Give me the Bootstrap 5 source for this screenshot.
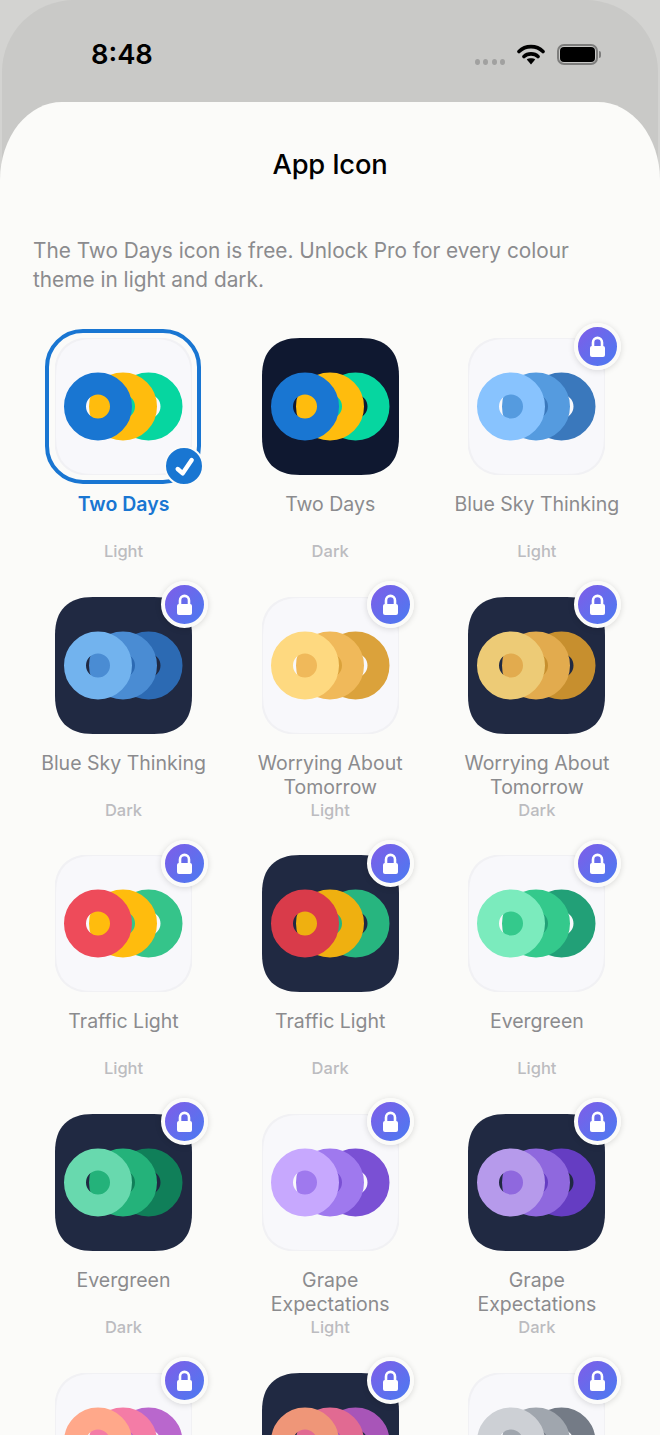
<!DOCTYPE html>
<html lang="en">
<head>
  <meta charset="UTF-8">
  <title>App Icon</title>
  <link href="https://cdn.jsdelivr.net/npm/bootstrap@5.3.0/dist/css/bootstrap.min.css" rel="stylesheet" />
  <style>
    html, body { height: 1435px; overflow: hidden; }
    body { background: #d3d3d1; font-family: Inter, "Liberation Sans", sans-serif; }
    .phone-back { height: 1435px; margin: 0 2px; background: #c9c9c7; border-radius: 72px 72px 0 0; }
    .status-row { height: 102px; padding: 6px 57px 0 89px; }
    .status-time { font-size: 27.3px; font-weight: 600; color: #000; width: 66px; padding-top: 3px; }
    .signal-dot { width: 5px; height: 6px; border-radius: 50%; background: #a1a1a0; }
    .signal-dots { gap: 3.5px; margin: 16px 12px 0 0; }
    .battery-shell { width: 41px; height: 21px; border: 2px solid #7d7d7c; border-radius: 7px; padding: 1px; }
    .battery-fill { background: #000; border-radius: 4px; }
    .battery-cap { width: 2px; height: 7px; background: #7d7d7c; border-radius: 0 2px 2px 0; margin-left: 1px; }
    .sheet { margin: 0 -2px; height: 1333px; background: #fbfbf9; border-radius: 62px 62px 0 0 / 78px 78px 0 0; }
    .sheet-title { font-size: 27.3px; font-weight: 500; line-height: 32px; color: #000; padding-top: 47px; margin: 0; letter-spacing: -0.2px; }
    .sheet-intro { font-size: 20.8px; line-height: 29px; color: #8b8b8e; margin: 0; padding: 55px 33px 0; }
    .icon-grid { padding: 44px 19.8px 0 20.2px; }
    .tile { height: 258.67px; }
    .icon-wrap { width: 137px; height: 137px; }
    .app-icon { width: 137px; height: 137px; display: block; }
    .picked-frame { position: absolute; inset: -9px -9px -9px -10px; border: 4.5px solid #1976d2; border-radius: 38px; }
    .picked-badge { position: absolute; right: -12px; bottom: -11px; width: 40px; height: 40px; border-radius: 50%; background: #1976d2; border: 2px solid #fbfbf9; }
    .lock-badge { position: absolute; right: -15.5px; top: -15.5px; width: 47px; height: 47px; border-radius: 50%; border: 4px solid #fbfbf9; background: linear-gradient(135deg, #7f5de8, #4a7bf1); box-shadow: 0 1px 6px rgba(0,0,0,.14); }
    .tile-name { font-size: 19.5px; line-height: 24px; height: 48px; color: #8b8b8e; margin-top: 17px; padding: 0 16px; }
    .tile-name.is-picked { color: #1976d2; font-weight: 600; }
    .tile-kind { font-size: 16.5px; line-height: 22px; color: #bcbcc0; font-weight: 500; }
  </style>
</head>
<body>

  <div class="phone-back">
    <!-- Status bar -->
    <div class="status-row d-flex align-items-center">
      <div class="status-time">8:48</div>
      <div class="signal-dots d-flex ms-auto">
        <span class="signal-dot"></span><span class="signal-dot"></span><span class="signal-dot"></span><span class="signal-dot"></span>
      </div>
      <svg width="28" height="22" viewBox="0 0 28 22" class="me-2">
        <path d="M2 8.5C8.5 2 19.5 2 26 8.5M7 13.5C10.5 10 17.5 10 21 13.5" fill="none" stroke="#000" stroke-width="3.6" stroke-linecap="round"/>
        <path d="M9.8 16.4C12 15 16 15 18.2 16.4L14 21.5Z" fill="#000"/>
      </svg>
      <div class="d-flex align-items-center ms-1">
        <div class="battery-shell d-flex"><div class="battery-fill flex-grow-1"></div></div>
        <div class="battery-cap"></div>
      </div>
    </div>

    <!-- Sheet -->
    <div class="sheet">
      <h1 class="sheet-title text-center">App Icon</h1>
      <p class="sheet-intro">The Two Days icon is free. Unlock Pro for every colour theme in light and dark.</p>
      <div class="icon-grid row g-0" id="iconGrid">
        <!-- Filled by JS -->
      </div>
    </div>
  </div>

  <script>
    const themes = [
      ['Two Days', 'Light', ['#1976d2', '#ffbc0d', '#06d6a0']],
      ['Two Days', 'Dark', ['#1976d2', '#ffbc0d', '#06d6a0']],
      ['Blue Sky Thinking', 'Light', ['#88c3fe', '#559bdf', '#3a78bc']],
      ['Blue Sky Thinking', 'Dark', ['#72b3ee', '#4a8cd3', '#2c6ab3']],
      ['Worrying About Tomorrow', 'Light', ['#fed980', '#f0b95a', '#dba23b']],
      ['Worrying About Tomorrow', 'Dark', ['#edcb76', '#e2ab4e', '#c78f2e']],
      ['Traffic Light', 'Light', ['#ee4b5a', '#ffbc0d', '#35c48a']],
      ['Traffic Light', 'Dark', ['#d93b4a', '#efb010', '#27b57f']],
      ['Evergreen', 'Light', ['#7bebbd', '#34c98c', '#22a077']],
      ['Evergreen', 'Dark', ['#68d9ae', '#24b27a', '#107f59']],
      ['Grape Expectations', 'Light', ['#c7a8fe', '#9f79ee', '#7a50d4']],
      ['Grape Expectations', 'Dark', ['#b69aeb', '#8f68de', '#653dc2']],
      ['', '', ['#ffa88a', '#f47ca6', '#b967cd']],
      ['', '', ['#ef9678', '#e16a92', '#a855b8']],
      ['', '', ['#cdd0d5', '#a0a6ae', '#747b86']]
    ];
    // last row is cut off by the screen, its labels never show
    const lastRowFills = ['#f8f8fb', '#202942', '#f8f8fb'];

    const squircle = 'M38 0H99C124 0 137 13 137 38V99C137 124 124 137 99 137H38C13 137 0 124 0 99V38C0 13 13 0 38 0Z';
    const lock = `<svg width="39" height="39" viewBox="0 0 39 39">
      <path d="M15 20v-4.6a4.5 4.5 0 0 1 9 0V20" fill="none" stroke="#fff" stroke-width="2.6"/>
      <rect x="12" y="19" width="15" height="11" rx="2" fill="#fff"/></svg>`;
    const check = `<svg width="36" height="36" viewBox="0 0 36 36">
      <path d="M11.7 21l5 4.3L25.7 12" fill="none" stroke="#fff" stroke-width="4.4" stroke-linecap="round" stroke-linejoin="round"/></svg>`;

    function ring(cx, color) {
      return `<circle cx="${cx}" cy="68.5" r="23" fill="none" stroke="${color}" stroke-width="22"/>`;
    }

    const grid = document.getElementById('iconGrid');
    themes.forEach((t, i) => {
      const picked = i === 0;
      let fill = t[1] === 'Dark' ? '#202942' : '#f8f8fb';
      if (i === 1) fill = '#0f1830';
      if (i >= 12) fill = lastRowFills[i - 12];
      const edge = fill === '#f8f8fb' ? 'stroke="#f1f1f4" stroke-width="2"' : '';
      const c = t[2];
      grid.innerHTML += `
        <div class="tile col-4 d-flex flex-column align-items-center text-center">
          <div class="icon-wrap position-relative">
            <svg class="app-icon" viewBox="0 0 137 137">
              <path d="${squircle}" fill="${fill}" ${edge}/>
              ${ring(93.5, c[2])}${ring(68, c[1])}${ring(43, c[0])}
            </svg>
            ${picked ? `<div class="picked-frame"></div><div class="picked-badge">${check}</div>` : ''}
            ${i > 1 ? `<div class="lock-badge">${lock}</div>` : ''}
          </div>
          <div class="tile-name ${picked ? 'is-picked' : ''}">${t[0]}</div>
          <div class="tile-kind">${t[1]}</div>
        </div>`;
    });
  </script>

  <script src="https://cdn.jsdelivr.net/npm/bootstrap@5.3.0/dist/js/bootstrap.bundle.min.js"></script>
</body>
</html>
